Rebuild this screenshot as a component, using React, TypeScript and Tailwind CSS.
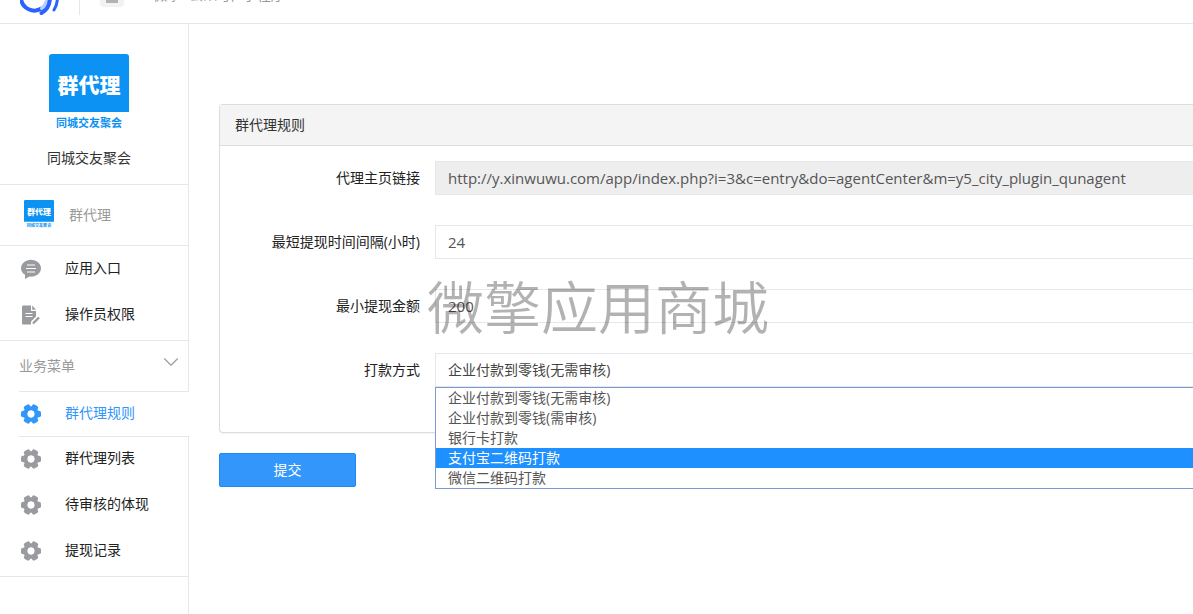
import React, { useState } from "react";
import { ChevronDown } from "lucide-react";

const PAY_METHODS = [
  "企业付款到零钱(无需审核)",
  "企业付款到零钱(需审核)",
  "银行卡打款",
  "支付宝二维码打款",
  "微信二维码打款"
];

const APP_MENU = [
  { id: "entry", label: "应用入口", icon: ChatIcon },
  { id: "operator", label: "操作员权限", icon: DocIcon }
];

const BUSINESS_MENU = [
  { id: "rule", label: "群代理规则", active: true },
  { id: "list", label: "群代理列表" },
  { id: "pending", label: "待审核的体现" },
  { id: "records", label: "提现记录" }
];

const INPUT =
  "h-[34px] w-full border border-r-0 border-[#e7e7eb] px-3 text-[15px] text-[#555] outline-none rounded-none";

function GearIcon() {
  return (
    <svg viewBox="0 0 20 20" className="h-5 w-5 shrink-0" fill="currentColor" aria-hidden="true">
      <circle cx="10" cy="10" r="5.6" fill="none" stroke="currentColor" strokeWidth="4.4" />
      {[30, 90, 150, 210, 270, 330].map(a => (
        <rect key={a} x="6.700" y="0" width="6.600" height="6" rx="2" transform={`rotate(${a} 10 10)`} />
      ))}
      <circle cx="10" cy="10" r="3.400" fill="#fff" />
    </svg>
  );
}

function ChatIcon() {
  return (
    <svg viewBox="0 0 20 20" className="h-5 w-5 shrink-0" aria-hidden="true">
      <path d="M10 .8C4.500.8 0 4.500 0 9.300c0 2.800 1.500 5 4 6.500v4.200l4.500-2.400c.5.100 1 .1 1.500.1 5.500 0 10-3.700 10-8.400S15.500.8 10 .8Z" fill="currentColor" />
      <path d="M6 6h8M5 9.500h10M6 13h8" stroke="#fff" strokeWidth="1.200" />
    </svg>
  );
}

function DocIcon() {
  return (
    <svg viewBox="0 0 20 20" className="h-5 w-5 shrink-0" aria-hidden="true">
      <path d="M2.500.5H10v5.500h5v5.500l-5 5v3h-7.500C1.600 19.500 1 19 1 18V2C1 1 1.600.5 2.500.5Z" fill="currentColor" />
      <path d="M11.200.5 15 4.800h-3.800Z" fill="currentColor" />
      <path d="M4.500 8.500h7M4.500 11.500h7" stroke="#fff" strokeWidth="1.200" />
      <path d="m18 12.500-6 6" fill="none" stroke="currentColor" strokeWidth="2.400" />
    </svg>
  );
}

function AgentLogo({ className }: { className: string }) {
  return (
    <svg viewBox="0 0 80 80" className={className} role="img" aria-label="群代理">
      <path d="M0 58V3a3 3 0 0 1 3-3h74a3 3 0 0 1 3 3v55Z" fill="#0c92f2" />
      <text x="40" y="39" textAnchor="middle" fontSize="21" fontWeight="900" fill="#fff">群代理</text>
      <text x="40" y="73" textAnchor="middle" fontSize="11" fontWeight="700" fill="#0c92f2">同城交友聚会</text>
    </svg>
  );
}

function Field({ id, label, children }: { id: string; label: string; children: React.ReactNode }) {
  return (
    <div className="mb-[30px] flex">
      <label htmlFor={id} className="w-[200px] shrink-0 pr-[15px] text-right leading-[34px] text-[#222]">
        {label}
      </label>
      <div className="relative grow">{children}</div>
    </div>
  );
}

export default function App() {
  const [method, setMethod] = useState(PAY_METHODS[0]);
  const [hovered, setHovered] = useState(3);

  return (
    <div className="flex min-h-screen flex-col overflow-x-hidden bg-white font-['Open_Sans','Noto_Sans_CJK_SC',sans-serif] text-[14px] leading-5 text-[#333]">
      <header className="flex h-6 items-end overflow-hidden border-b border-[#e7e7eb] pb-2 pl-5">
        <svg viewBox="0 0 42 42" className="h-[42px] w-[42px] shrink-0" fill="none" stroke="#2b62fb" strokeLinecap="round" aria-hidden="true">
          <path d="M1 26a13.500 13.500 0 0 0 20.500 9.500" strokeWidth="4" />
          <path d="M21.500 35.500q3.500-2.500 5-7.500" strokeWidth="3" stroke="#b9cbff" />
          <path d="M30 24c0 7-3 13-8.500 16" strokeWidth="4" />
          <path d="M37.500 24c0 5-1 9-3.500 13" strokeWidth="3" />
        </svg>
        <div className="ml-[17px] h-8 w-px shrink-0 bg-[#e7e7eb]" />
        <div className="mb-2 ml-5 flex h-6 w-6 shrink-0 items-center justify-center rounded bg-[#f2f2f2]">
          <span className="h-4 w-3 bg-[#b2b2b2]" />
        </div>
        <nav className="mb-[10px] ml-3 flex gap-2 whitespace-nowrap text-[#999]">
          <span className="mr-1">/</span>
          <span>微擎</span>
          <span>公众号,</span>
          <span>小程序</span>
        </nav>
      </header>

      <div className="flex grow">
        {/* Sidebar */}
        <aside className="flex w-[189px] shrink-0 flex-col">
          <div className="flex flex-col items-center border-r border-b border-[#e7e7eb] pt-[30px] pb-4 pr-[10px]">
            <AgentLogo className="h-20 w-20" />
            <div className="mt-[14px]">同城交友聚会</div>
          </div>
          <div className="flex h-[61px] items-center border-r border-b border-[#e7e7eb] pl-6 text-[#999]">
            <AgentLogo className="h-[30px] w-[30px]" />
            <span className="ml-[15px]">群代理</span>
          </div>

          <nav className="border-r border-b border-[#e7e7eb] pb-[2px]">
            {APP_MENU.map(item => (
              <a key={item.id} href={`#${item.id}`} className="flex h-[46px] items-center pl-[21px] text-[#999b9e]">
                <item.icon />
                <span className="ml-6 pb-[2px] text-[#222]">{item.label}</span>
              </a>
            ))}
          </nav>

          <div className="flex h-[51px] border-r border-[#e7e7eb] pl-[19px]">
            <div className="flex grow items-center justify-between border-b border-[#e7e7eb] pr-1 text-[#999]">
              <span>业务菜单</span>
              <ChevronDown className="mb-2 h-[26px] w-[26px]" strokeWidth={1} />
            </div>
          </div>

          <nav className="border-b border-[#e7e7eb]">
            {BUSINESS_MENU.map(item => (
              <div key={item.id} className={item.active ? "pl-[19px]" : "border-r border-[#e7e7eb] pl-[19px]"}>
                <a
                  href={`#${item.id}`}
                  className={`flex items-center pl-[2px] ${
                    item.active ? "h-[45px] border-b border-[#e7e7eb] text-[#3296fa]" : "h-[46px] pb-[2px] text-[#999b9e]"
                  }`}
                >
                  <GearIcon />
                  <span className={`ml-6 pb-[2px] ${item.active ? "" : "text-[#222]"}`}>{item.label}</span>
                </a>
              </div>
            ))}
            <div className="h-px border-r border-[#e7e7eb]" />
          </nav>
          <div className="grow border-r border-[#e7e7eb]" />
        </aside>

        {/* Settings form */}
        <main className="relative min-w-0 grow pt-20 pl-[30px]">
          <form onSubmit={e => e.preventDefault()}>
            <section className="rounded-l border border-r-0 border-[#ddd] shadow-xs">
              <h1 className="h-[41px] border-b border-[#ddd] bg-[#f4f4f4] px-[15px] leading-10">群代理规则</h1>
              <div className="py-[15px] pl-[15px]">
                <Field id="link" label="代理主页链接">
                  <input
                    id="link"
                    readOnly
                    className={`${INPUT} bg-[#eee]`}
                    value="http://y.xinwuwu.com/app/index.php?i=3&c=entry&do=agentCenter&m=y5_city_plugin_qunagent"
                  />
                </Field>
                <Field id="interval" label="最短提现时间间隔(小时)">
                  <input id="interval" className={INPUT} defaultValue="24" />
                </Field>
                <Field id="amount" label="最小提现金额">
                  <input id="amount" className={INPUT} defaultValue="200" />
                </Field>
                <Field id="method" label="打款方式">
                  <select
                    id="method"
                    value={method}
                    onChange={e => setMethod(e.target.value)}
                    className="h-[34px] w-full appearance-none rounded-none border border-r-0 border-[#e7e7eb] bg-white px-3 text-[14px] text-[#444] outline-none"
                  >
                    {PAY_METHODS.map(m => (
                      <option key={m}>{m}</option>
                    ))}
                  </select>
                  <ul role="listbox" aria-label="打款方式" className="absolute top-full right-0 left-0 z-10 border border-r-0 border-[#7a9bd2] bg-white">
                    {PAY_METHODS.map((m, i) => (
                      <li
                        key={m}
                        role="option"
                        aria-selected={m === method}
                        onMouseEnter={() => setHovered(i)}
                        onClick={() => setMethod(m)}
                        className={`px-3 ${hovered === i ? "bg-[#1e90ff] text-white" : "text-[#555]"}`}
                      >
                        {m}
                      </li>
                    ))}
                  </ul>
                </Field>
              </div>
            </section>
            <button type="submit" className="mt-5 h-[34px] w-[137px] rounded-xs border border-[#1e88f5] bg-[#3296fa] text-white">
              提交
            </button>
          </form>

          {/* Watermark */}
          <div className="pointer-events-none absolute top-[244px] left-[238px] font-['Noto_Sans_CJK_SC',sans-serif] text-[57px] leading-[72px] font-[350] whitespace-nowrap text-black/30">
            微擎应用商城
          </div>
        </main>
      </div>
    </div>
  );
}
